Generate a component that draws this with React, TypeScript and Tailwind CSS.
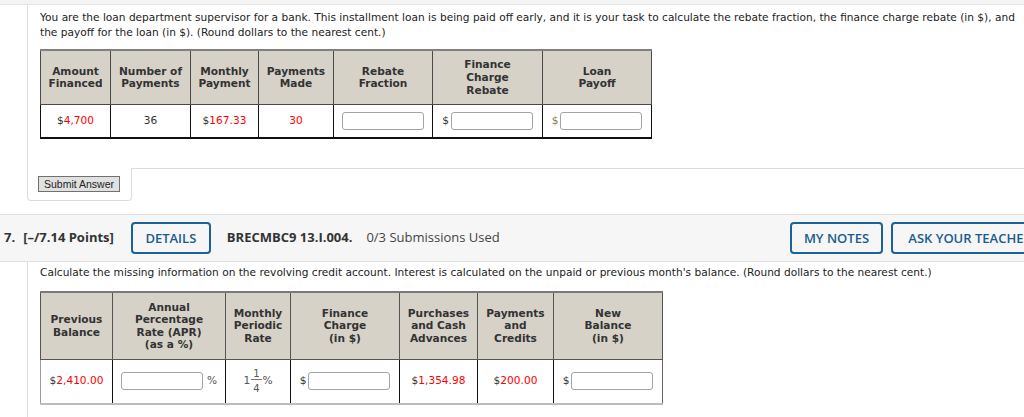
import React from "react";

function Box() {
  return (
    <input
      type="text"
      className="w-[82px] h-[18px] border border-[#a3a3a3] rounded-[3px] bg-white outline-none"
    />
  );
}

function Money({ v }: { v: string }) {
  return (
    <span>
      <span className="text-[#333]">$</span>
      <span className="text-[#ff0000]">{v}</span>
    </span>
  );
}

export default function App() {
  return (
    <div className="w-[1024px] h-[417px] overflow-hidden bg-white [font-family:'DejaVu_Sans',sans-serif] text-[#222]">
      {/* top strip */}
      <div className="h-[4px] bg-[#f3f3f3] border-b border-[#e6e6e6] box-content" />

      {/* question 6 body */}
      <div className="ml-[27px]">
        <div className="border-l border-[#dcdcdc] pl-[12px] pt-[5px] pb-[29px]">
          <p className="w-[1100px] text-[10.6px] leading-[15px] text-[#222]">
            You are the loan department supervisor for a bank. This installment loan is being paid off early, and it is your task to calculate the rebate fraction, the finance charge rebate (in $), and
            <br />
            the payoff for the loan (in $). (Round dollars to the nearest cent.)
          </p>

          <table className="mt-[9px] table-fixed border-collapse w-[611px] text-[10.6px]">
            <colgroup>
              <col className="w-[70px]" />
              <col className="w-[80px]" />
              <col className="w-[68px]" />
              <col className="w-[75px]" />
              <col className="w-[99px]" />
              <col className="w-[110px]" />
              <col className="w-[109px]" />
            </colgroup>
            <thead>
              <tr className="bg-[#d6d2c8]">
                <th className="h-[54px] border border-[#4a4a4a] border-t-2 border-t-[#808080] font-bold leading-[12.6px] text-[#333] text-center align-middle p-0">Amount<br />Financed</th>
                <th className="h-[54px] border border-[#4a4a4a] border-t-2 border-t-[#808080] font-bold leading-[12.6px] text-[#333] text-center align-middle p-0">Number of<br />Payments</th>
                <th className="h-[54px] border border-[#4a4a4a] border-t-2 border-t-[#808080] font-bold leading-[12.6px] text-[#333] text-center align-middle p-0">Monthly<br />Payment</th>
                <th className="h-[54px] border border-[#4a4a4a] border-t-2 border-t-[#808080] font-bold leading-[12.6px] text-[#333] text-center align-middle p-0">Payments<br />Made</th>
                <th className="h-[54px] border border-[#4a4a4a] border-t-2 border-t-[#808080] font-bold leading-[12.6px] text-[#333] text-center align-middle p-0">Rebate<br />Fraction</th>
                <th className="h-[54px] border border-[#4a4a4a] border-t-2 border-t-[#808080] font-bold leading-[12.6px] text-[#333] text-center align-middle p-0">Finance<br />Charge<br />Rebate</th>
                <th className="h-[54px] border border-[#4a4a4a] border-t-2 border-t-[#808080] font-bold leading-[12.6px] text-[#333] text-center align-middle p-0">Loan<br />Payoff</th>
              </tr>
            </thead>
            <tbody>
              <tr>
                <td className="h-[34px] border border-[#111] border-b-2 text-center align-middle p-0"><Money v="4,700" /></td>
                <td className="h-[34px] border border-[#111] border-b-2 text-center align-middle p-0 text-[#333]">36</td>
                <td className="h-[34px] border border-[#111] border-b-2 text-center align-middle p-0"><Money v="167.33" /></td>
                <td className="h-[34px] border border-[#111] border-b-2 text-center align-middle p-0 text-[#ff0000]">30</td>
                <td className="h-[34px] border border-[#111] border-b-2 text-center align-middle p-0">
                  <div className="flex items-center justify-center"><Box /></div>
                </td>
                <td className="h-[34px] border border-[#111] border-b-2 text-center align-middle p-0">
                  <div className="flex items-center justify-center gap-[2px]"><span className="text-[#333]">$</span><Box /></div>
                </td>
                <td className="h-[34px] border border-[#111] border-b-2 text-center align-middle p-0">
                  <div className="flex items-center justify-center gap-[2px]"><span className="text-[#8a7a55]">$</span><Box /></div>
                </td>
              </tr>
            </tbody>
          </table>
        </div>

        <div className="flex">
          <div className="w-[105px] h-[33px] border-l border-r border-b border-[#dcdcdc] rounded-b-[4px] pl-[10px] pt-[8px] flex items-start">
            <button className="w-[82px] h-[16px] bg-[#e1e1e1] border border-[#707070] [font-family:'Liberation_Sans',sans-serif] text-[10.5px] leading-[14px] text-[#222] text-center">
              Submit Answer
            </button>
          </div>
          <div className="flex-1 border-t border-[#dcdcdc]" />
        </div>
      </div>

      {/* question 7 header */}
      <div className="mt-[13px] w-[1057px] border-t border-b border-[#e1e1e1] bg-[#f6f6f6] pt-[7px] pb-[7px] pr-[8px] flex items-center [font-family:'Open_Sans',sans-serif] text-[13px]">
        <span className="ml-[4px] font-bold text-[#333]">7.</span>
        <span className="ml-[8px] font-bold text-[#333]">[–/7.14 Points]</span>
        <button className="ml-[17px] h-[32px] w-[80px] border-2 border-[#1d6297] rounded-[4px] font-semibold text-[#1b5c8e] text-center leading-[28px]">
          DETAILS
        </button>
        <span className="ml-[16px] font-bold text-[#333]">BRECMBC9 13.I.004.</span>
        <span className="ml-[14px] text-[#444]">0/3 Submissions Used</span>
        <button className="ml-auto h-[32px] w-[93px] flex-none border-2 border-[#1d6297] rounded-[4px] font-semibold text-[#1b5c8e] text-center leading-[28px]">
          MY NOTES
        </button>
        <button className="ml-[8px] h-[32px] w-[158px] flex-none border-2 border-[#1d6297] rounded-[4px] font-semibold text-[#1b5c8e] text-center leading-[28px] whitespace-nowrap">
          ASK YOUR TEACHER
        </button>
      </div>

      {/* question 7 body */}
      <div className="ml-[27px] border-l border-[#dcdcdc] pl-[12px] pt-[3px] pb-[20px]">
        <p className="w-[1100px] text-[10.6px] leading-[15px] text-[#222]">
          Calculate the missing information on the revolving credit account. Interest is calculated on the unpaid or previous month's balance. (Round dollars to the nearest cent.)
        </p>

        <table className="mt-[11px] table-fixed border-collapse w-[622px] text-[10.6px]">
          <colgroup>
            <col className="w-[72px]" />
            <col className="w-[113px]" />
            <col className="w-[65px]" />
            <col className="w-[109px]" />
            <col className="w-[78px]" />
            <col className="w-[76px]" />
            <col className="w-[109px]" />
          </colgroup>
          <thead>
            <tr className="bg-[#d6d2c8]">
              <th className="h-[67px] border border-[#555] border-t-2 border-t-[#7a7a7a] font-bold leading-[12.6px] text-[#333] text-center align-middle p-0">Previous<br />Balance</th>
              <th className="h-[67px] border border-[#555] border-t-2 border-t-[#7a7a7a] font-bold leading-[12.6px] text-[#333] text-center align-middle p-0">Annual<br />Percentage<br />Rate (APR)<br />(as a %)</th>
              <th className="h-[67px] border border-[#555] border-t-2 border-t-[#7a7a7a] font-bold leading-[12.6px] text-[#333] text-center align-middle p-0">Monthly<br />Periodic<br />Rate</th>
              <th className="h-[67px] border border-[#555] border-t-2 border-t-[#7a7a7a] font-bold leading-[12.6px] text-[#333] text-center align-middle p-0">Finance<br />Charge<br />(in $)</th>
              <th className="h-[67px] border border-[#555] border-t-2 border-t-[#7a7a7a] font-bold leading-[12.6px] text-[#333] text-center align-middle p-0">Purchases<br />and Cash<br />Advances</th>
              <th className="h-[67px] border border-[#555] border-t-2 border-t-[#7a7a7a] font-bold leading-[12.6px] text-[#333] text-center align-middle p-0">Payments<br />and<br />Credits</th>
              <th className="h-[67px] border border-[#555] border-t-2 border-t-[#7a7a7a] font-bold leading-[12.6px] text-[#333] text-center align-middle p-0">New<br />Balance<br />(in $)</th>
            </tr>
          </thead>
          <tbody>
            <tr>
              <td className="h-[45px] border border-[#111] border-l-[#999] border-b-2 border-b-[#bdbdbd] text-center align-middle p-0"><Money v="2,410.00" /></td>
              <td className="h-[45px] border border-[#111] border-b-2 border-b-[#bdbdbd] text-center align-middle p-0">
                <div className="flex items-center justify-center gap-[4px]"><Box /><span className="text-[#555]">%</span></div>
              </td>
              <td className="h-[45px] border border-[#111] border-b-2 border-b-[#bdbdbd] text-center align-middle p-0">
                <div className="flex items-center justify-center text-[#555]">
                  <span>1</span>
                  <span className="inline-flex flex-col items-center mx-[1px] text-[10px]">
                    <span className="leading-[11px] border-b border-[#777] px-[2px]">1</span>
                    <span className="leading-[11px] pt-[3px]">4</span>
                  </span>
                  <span>%</span>
                </div>
              </td>
              <td className="h-[45px] border border-[#111] border-b-2 border-b-[#bdbdbd] text-center align-middle p-0">
                <div className="flex items-center justify-center gap-[2px]"><span className="text-[#333]">$</span><Box /></div>
              </td>
              <td className="h-[45px] border border-[#111] border-b-2 border-b-[#bdbdbd] text-center align-middle p-0"><Money v="1,354.98" /></td>
              <td className="h-[45px] border border-[#111] border-b-2 border-b-[#bdbdbd] text-center align-middle p-0"><Money v="200.00" /></td>
              <td className="h-[45px] border border-[#111] border-r-[#666] border-b-2 border-b-[#bdbdbd] text-center align-middle p-0">
                <div className="flex items-center justify-center gap-[2px]"><span className="text-[#333]">$</span><Box /></div>
              </td>
            </tr>
          </tbody>
        </table>
      </div>
    </div>
  );
}
